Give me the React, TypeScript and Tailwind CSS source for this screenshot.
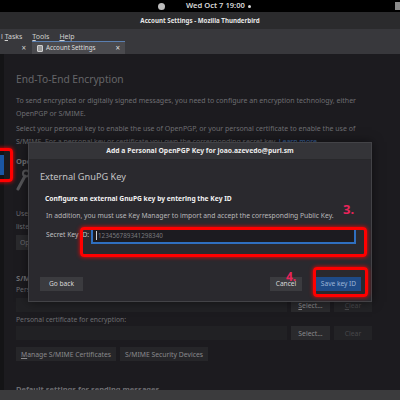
import React from 'react';

const App: React.FC = () => {
  return (
    <div className="relative w-[400px] h-[400px] overflow-hidden flex flex-col bg-[#1c1b1f] text-[#6e6e72] font-['Noto_Sans',sans-serif]">
      {/* gnome top bar */}
      <div className="h-[12px] bg-black flex items-center relative text-[7.6px] text-[#d8d8d8] font-semibold whitespace-nowrap">
        <span className="ml-[158px] w-[7px] h-[7px] rounded-full bg-[#bdbdbd]" />
        <span className="ml-[21px]">Wed Oct 7 19:00</span>
        <span className="ml-[3px] w-[3px] h-[3px] rounded-full bg-[#d8d8d8]" />
        <span className="ml-auto w-[5px] h-[8px] bg-[#8a8a8a]" />
      </div>
      {/* window title */}
      <div className="h-[17px] bg-[#2b2b2d] flex items-center justify-center text-[6.2px] font-bold text-[#e6e6e6] whitespace-nowrap">
        Account Settings - Mozilla Thunderbird
      </div>
      {/* menu + tabs */}
      <div className="bg-[#38383c] flex flex-col">
        <div className="h-[12px] flex items-end gap-[10px] text-[7px] text-[#d0d0d0] leading-none pb-[1px] whitespace-nowrap">
          <span className="ml-[1px]">l <span className="underline">T</span>asks</span>
          <span><span className="underline">T</span>ools</span>
          <span><span className="underline">H</span>elp</span>
        </div>
        <div className="h-[13px] flex items-stretch">
          <div className="w-[32px] flex items-center justify-end pr-[6px] text-[8px] text-[#cfcfcf]">×</div>
          <div className="w-[93px] bg-[#4a4a4e] border-t border-[#5b7fb0] flex items-center text-[6.3px] text-[#dedede] whitespace-nowrap">
            <span className="ml-[5px] w-[6px] h-[7px] rounded-[1px] bg-[#9a9a9a] border border-[#cfcfcf]" />
            <span className="ml-[3px]">Account Settings</span>
            <span className="ml-auto mr-[5px] text-[8px]">×</span>
          </div>
        </div>
      </div>
      {/* content */}
      <div className="flex-1 flex min-h-0">
        <div className="w-[4px] bg-[#141416] flex flex-col">
          <div className="h-[101px]" />
          <div className="h-[20px] bg-[#1b56a4]" />
        </div>
        <div className="flex-1 pl-[12px] pr-[28px] overflow-hidden text-[6.8px] leading-[13px]">
          <div className="mt-[17px] text-[10.2px] leading-[16px] text-[#666669] whitespace-nowrap">End-To-End Encryption</div>
          <p className="mt-[7px] text-[7px]">To send encrypted or digitally signed messages, you need to configure an encryption technology, either OpenPGP or S/MIME.</p>
          <p className="mt-[2px] text-[7px]">
            Select your personal key to enable the use of OpenPGP, or your personal certificate to enable the use of S/MIME. For a personal key or certificate you own the corresponding secret key.{' '}
            <span className="text-[#3f6aa6]">Learn more</span>
          </p>
          <div className="mt-[7px] font-bold text-[7.5px]">OpenPGP</div>
          <svg width="13" height="22" viewBox="0 0 13 22" className="mt-[1px]">
            <path d="M2 20 L9 7" stroke="#555558" strokeWidth="3" strokeLinecap="round" />
            <circle cx="10" cy="4.5" r="3" fill="none" stroke="#555558" strokeWidth="2" />
          </svg>
          <div className="mt-[16px] whitespace-nowrap">Use Thunderbird's OpenPGP for this identity</div>
          <div>listed keys</div>
          <div className="mt-[2px] w-[90px] h-[15px] bg-[#2a2a2d] px-[4px] flex items-center whitespace-nowrap">OpenPGP Key Manager</div>
          <div className="mt-[23px] font-bold text-[7.5px] leading-[11px]">S/MIME</div>
          <div className="leading-[12px]">Personal certificate for digital signing:</div>
          <div className="flex items-center gap-[4px] mt-[2px]">
            <div className="flex-1 h-[14px] bg-[#212124]" />
            <div className="w-[39px] h-[14px] bg-[#2a2a2d] flex items-center justify-center text-[#8a8a8d]">
              <span><span className="underline">S</span>elect...</span>
            </div>
            <div className="w-[38px] h-[14px] bg-[#232326] flex items-center justify-center text-[#48484b]">
              <span><span className="underline">C</span>lear</span>
            </div>
          </div>
          <div className="mt-[1px]">Personal certificate for encryption:</div>
          <div className="flex items-center gap-[4px] mt-[0px]">
            <div className="flex-1 h-[14px] bg-[#212124]" />
            <div className="w-[39px] h-[14px] bg-[#2a2a2d] flex items-center justify-center text-[#8a8a8d]">Select...</div>
            <div className="w-[38px] h-[14px] bg-[#232326] flex items-center justify-center text-[#48484b]">Clear</div>
          </div>
          <div className="flex gap-[4px] mt-[7px] whitespace-nowrap">
            <div className="h-[14px] px-[5px] bg-[#262629] flex items-center text-[#8a8a8d]">
              <span><span className="underline">M</span>anage S/MIME Certificates</span>
            </div>
            <div className="h-[14px] px-[5px] bg-[#262629] flex items-center text-[#8a8a8d]">S/MIME Security Devices</div>
          </div>
          <div className="mt-[22px] font-bold text-[7.5px] whitespace-nowrap">Default settings for sending messages</div>
        </div>
      </div>
      <div className="h-[10px] bg-[#3b3b3d]" />

      {/* dialog */}
      <div className="absolute left-[28px] top-[142px] w-[344px] h-[160px] bg-[#2a292e] border border-[#434347] flex flex-col shadow-[0_0_10px_rgba(0,0,0,0.5)]">
        <div className="h-[17px] bg-[#343438] border-b border-[#28282b] flex items-center justify-center text-[6.8px] font-bold text-[#ececec] whitespace-nowrap">
          Add a Personal OpenPGP Key for joao.azevedo@puri.sm
        </div>
        <div className="flex-1 flex flex-col px-[11px]">
          <div className="mt-[9px] text-[9.2px] leading-[16px] text-[#c4c4c6] whitespace-nowrap">External GnuPG Key</div>
          <div className="mt-[8px] ml-[5px] text-[6.7px] font-bold text-[#f2f2f2] leading-[12px] whitespace-nowrap">Configure an external GnuPG key by entering the Key ID</div>
          <div className="mt-[5px] ml-[6px] text-[6.75px] text-[#b8b8ba] leading-[12px] whitespace-nowrap">In addition, you must use Key Manager to import and accept the corresponding Public Key.</div>
          <div className="mt-[5px] ml-[6px] flex items-center">
            <span className="text-[6.7px] text-[#c0c0c2] w-[45px] whitespace-nowrap">Secret Key ID:</span>
            <div className="flex-1 mr-[4px] h-[17px] bg-[#1c1b20] border-2 border-[#2f6fc0] flex items-center pl-[3px] text-[6.3px] text-[#7a7a7e]">
              <span className="w-[1px] h-[9px] bg-[#d0d0d0] mr-[1px]" />
              123456789341298340
            </div>
          </div>
          <div className="mt-auto mb-[10px] flex items-center text-[6.6px] whitespace-nowrap">
            <div className="h-[14px] w-[43px] bg-[#3b3b3f] flex items-center justify-center text-[#d8d8d8]">Go back</div>
            <div className="ml-auto h-[14px] w-[32px] bg-[#3b3b3f] flex items-center justify-center text-[#d8d8d8]">Cancel</div>
            <div className="ml-[14px] mr-[-1px] h-[14px] w-[45px] bg-[#1f4a86] flex items-center justify-center text-[#9cb4d6]">Save key ID</div>
          </div>
        </div>
      </div>

      {/* annotations */}
      <div className="absolute left-[-6px] top-[148px] w-[19px] h-[34px] border-[3px] border-[#ff0000] rounded-[4px] shadow-[0_0_4px_#ff0000]" />
      <div className="absolute left-[80px] top-[227px] w-[287px] h-[30px] border-[3px] border-[#ff0000] rounded-[4px] shadow-[0_0_4px_#ff0000]" />
      <div className="absolute left-[313px] top-[267px] w-[55px] h-[30px] border-[3px] border-[#ff0000] rounded-[4px] shadow-[0_0_4px_#ff0000]" />
      <div className="absolute left-[343px] top-[203px] text-[13px] leading-none font-bold text-[#e8245a]">3.</div>
      <div className="absolute left-[286px] top-[271px] text-[12px] leading-none font-bold text-[#e8245a]">4.</div>
    </div>
  );
};

export default App;
